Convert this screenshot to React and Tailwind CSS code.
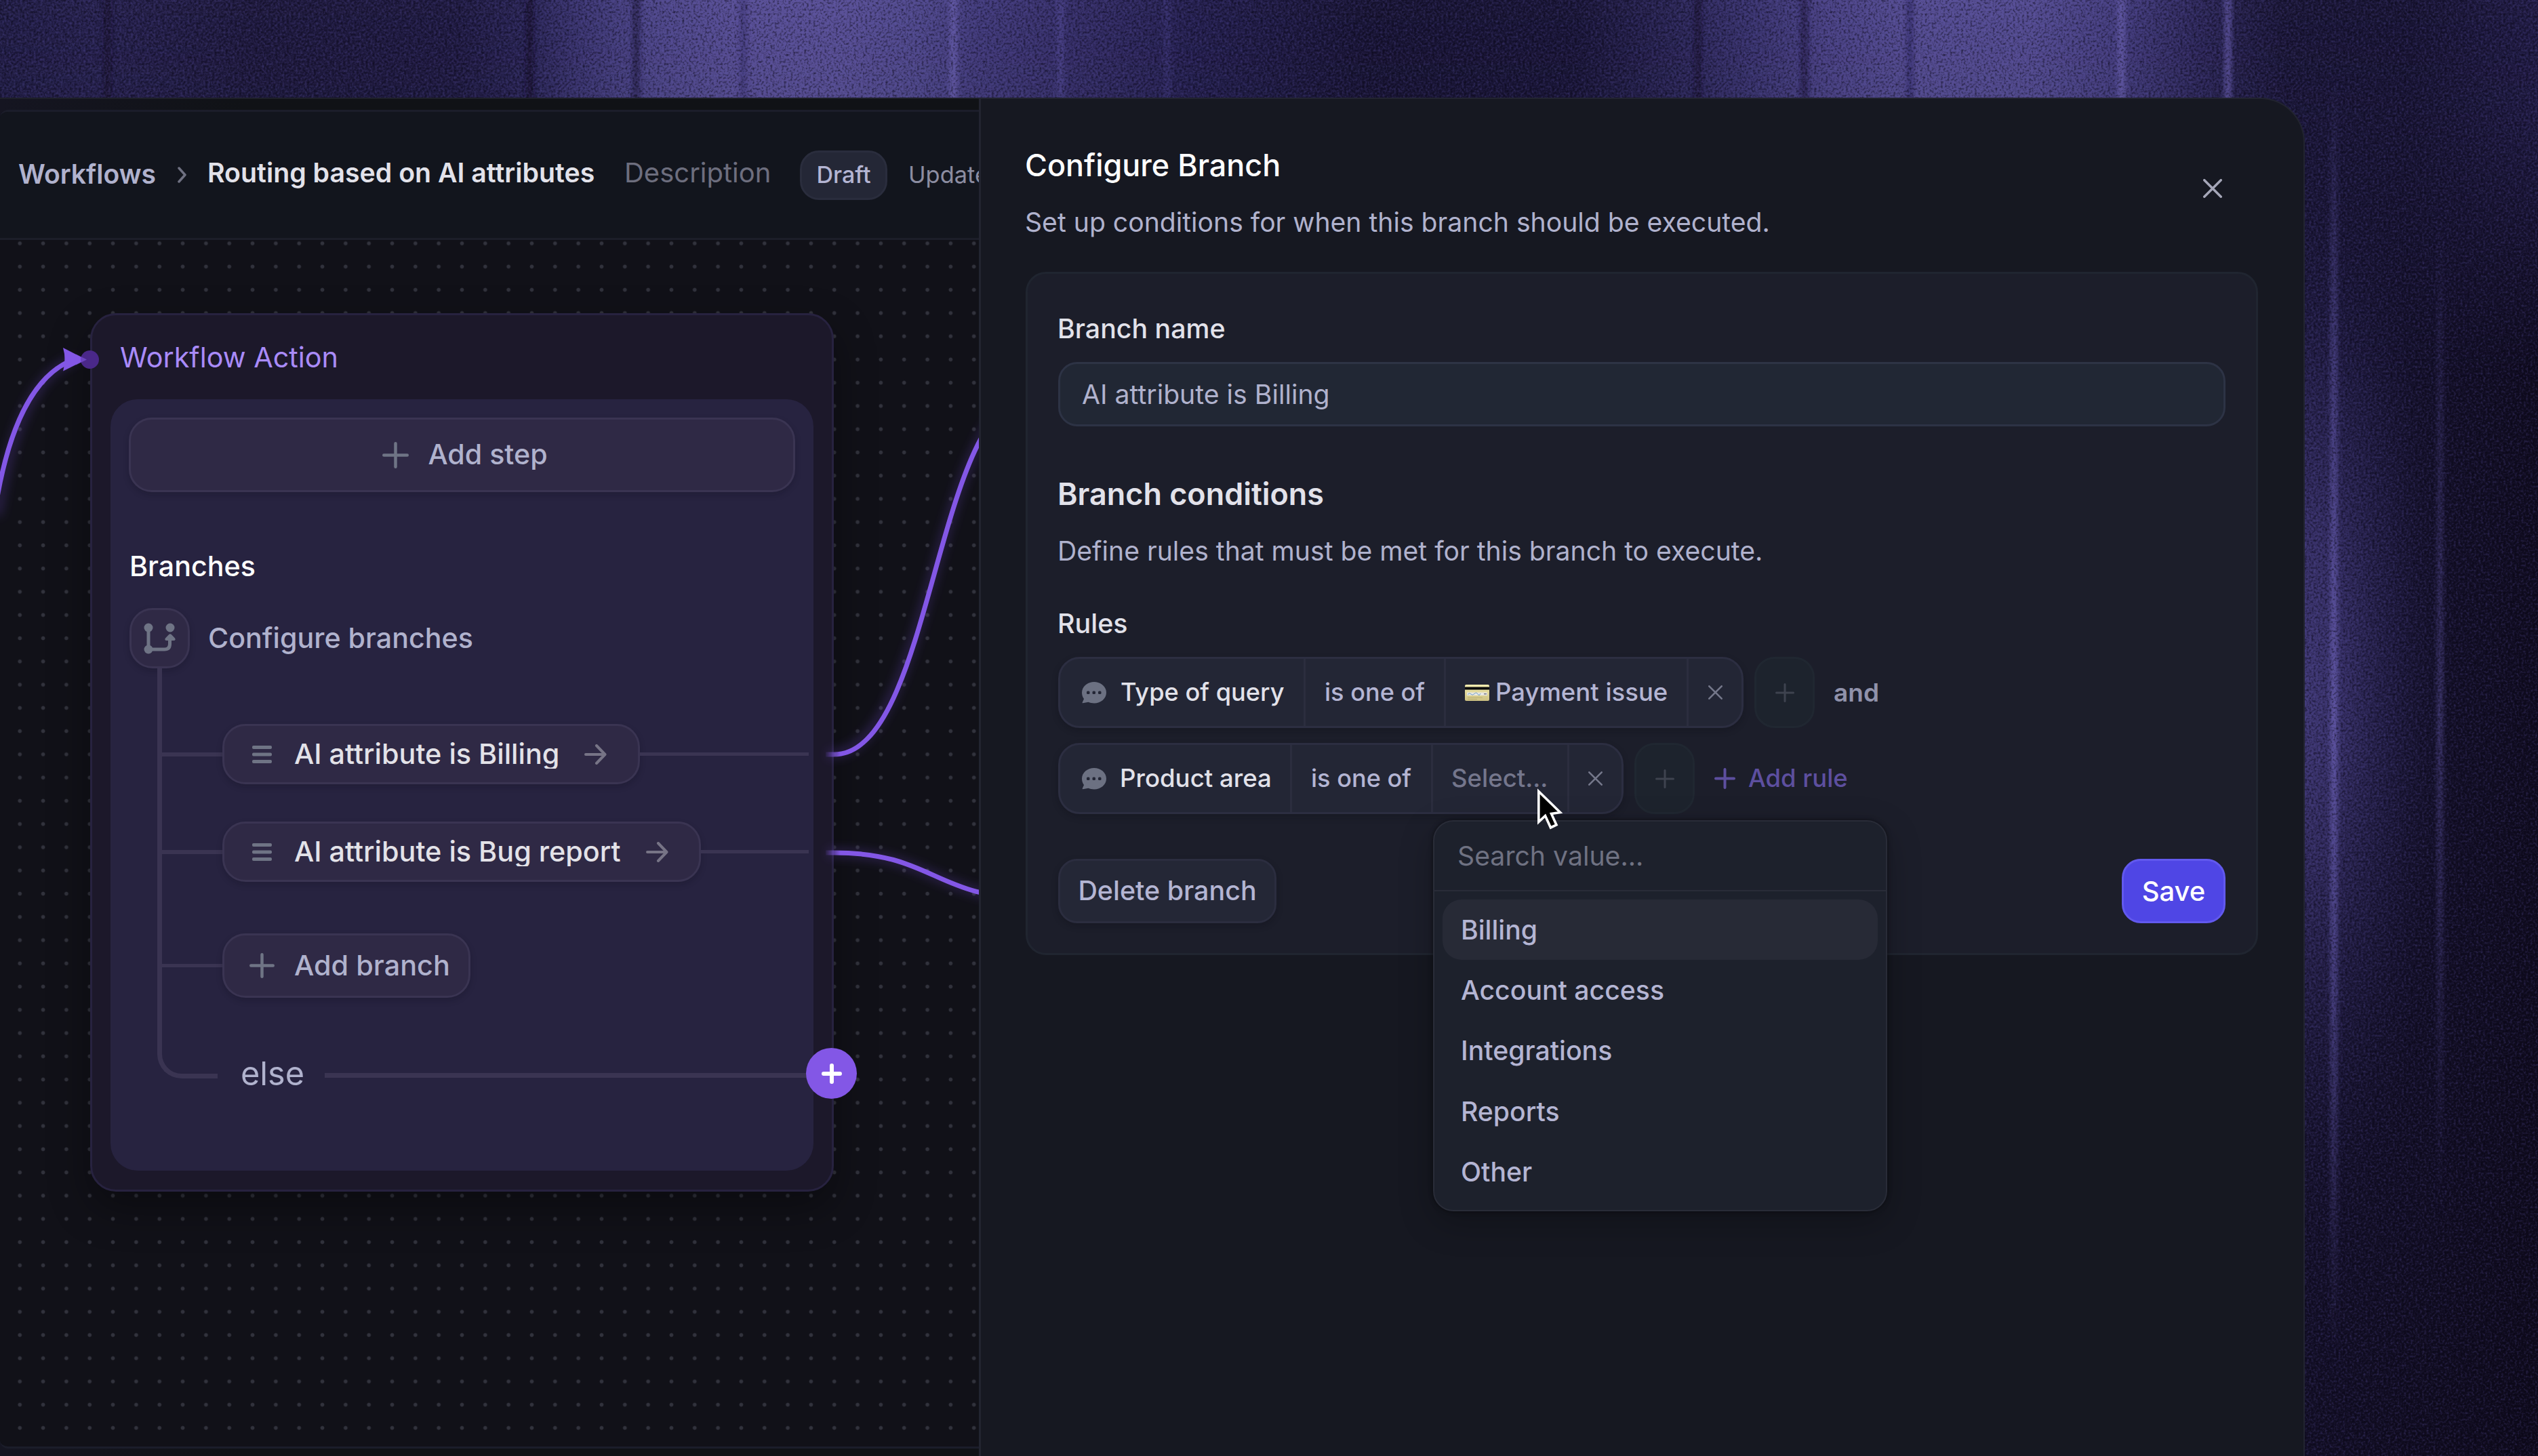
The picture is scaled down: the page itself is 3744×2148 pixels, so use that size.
import React from "react";

const BG_STOPS = [
  [0, "#231f47"], [0.04, "#28234f"], [0.1, "#201b3f"], [0.18, "#211c43"], [0.208, "#2b2656"], [0.23, "#3d3772"],
  [0.255, "#4e4789"], [0.29, "#595096"], [0.33, "#5a5197"], [0.36, "#514a8d"], [0.385, "#433c7b"], [0.42, "#373069"],
  [0.47, "#262150"], [0.54, "#1a1636"], [0.62, "#1b1739"], [0.66, "#2b2655"], [0.69, "#3a346e"], [0.72, "#4b4385"],
  [0.755, "#564e93"], [0.8, "#554d92"], [0.835, "#453e7e"], [0.865, "#2f295b"], [0.9, "#1c1839"], [0.95, "#1a1636"], [1, "#221d46"],
];

const TOP_STREAKS = [
  [158, "#120e26", 0.5], [781, "#120e2c", 0.65], [938, "#1a153a", 0.6], [1096, "#2d2660", 0.4], [1406, "#7a70c4", 0.45],
  [1564, "#5d54a6", 0.35], [1721, "#4f4696", 0.25], [2504, "#130f2b", 0.55], [2661, "#150f30", 0.5], [2817, "#2d2762", 0.6],
  [3129, "#7a70c4", 0.45], [3286, "#6a60b2", 0.6],
];

function Backdrop() {
  return (
    <svg className="absolute inset-0" width="3744" height="2148" viewBox="0 0 3744 2148" aria-hidden="true">
      <defs>
        <linearGradient id="band" x1="0" x2="1" y1="0" y2="0">
          {BG_STOPS.map(([o, c]) => <stop key={o} offset={o} stopColor={c} />)}
        </linearGradient>
        <linearGradient id="bandFade" x1="0" x2="0" y1="0" y2="1">
          <stop offset="0" stopColor="#fff" />
          <stop offset="0.3" stopColor="#fff" stopOpacity="0.9" />
          <stop offset="1" stopColor="#fff" stopOpacity="0" />
        </linearGradient>
        <mask id="bandMask"><rect width="3744" height="560" fill="url(#bandFade)" /></mask>
        <radialGradient id="side" gradientUnits="userSpaceOnUse" cx="0" cy="0" r="1" gradientTransform="translate(3395 1020) scale(215 860)">
          <stop offset="0" stopColor="#3f3874" />
          <stop offset="0.3" stopColor="#373067" stopOpacity="0.9" />
          <stop offset="0.65" stopColor="#282350" stopOpacity="0.5" />
          <stop offset="1" stopColor="#1a1636" stopOpacity="0" />
        </radialGradient>
        <linearGradient id="edge" x1="0" x2="1" y1="0" y2="0">
          <stop offset="0" stopColor="#1b1739" />
          <stop offset="1" stopColor="#100c20" />
        </linearGradient>
        <linearGradient id="foot" x1="0" x2="0" y1="0" y2="1">
          <stop offset="0" stopColor="#0d0918" stopOpacity="0" />
          <stop offset="1" stopColor="#0d0918" stopOpacity="0.5" />
        </linearGradient>
        <linearGradient id="streakA" x1="0" x2="0" y1="0" y2="1">
          <stop offset="0" stopColor="#5a519f" stopOpacity="0" />
          <stop offset="0.2" stopColor="#5a519f" stopOpacity="0.5" />
          <stop offset="0.5" stopColor="#655bab" stopOpacity="0.85" />
          <stop offset="0.72" stopColor="#5a519f" stopOpacity="0.6" />
          <stop offset="1" stopColor="#5a519f" stopOpacity="0" />
        </linearGradient>
        <filter id="grainDark" x="0" y="0" width="1" height="1" colorInterpolationFilters="sRGB">
          <feTurbulence type="fractalNoise" baseFrequency="0.3" numOctaves="2" seed="4" />
          <feColorMatrix values="0 0 0 0 0.02  0 0 0 0 0.01  0 0 0 0 0.06  -1.5 0 0 0 0.78" />
        </filter>
        <filter id="grainLight" x="0" y="0" width="1" height="1" colorInterpolationFilters="sRGB">
          <feTurbulence type="fractalNoise" baseFrequency="0.3" numOctaves="2" seed="4" />
          <feColorMatrix values="0 0 0 0 0.42  0 0 0 0 0.38  0 0 0 0 0.76  0.7 0 0 0 -0.35" />
        </filter>
        <filter id="soft" x="-2" width="5" y="0" height="1"><feGaussianBlur stdDeviation="3 0" /></filter>
      </defs>
      <rect width="3744" height="2148" fill="#15112c" />
      <rect x="3330" width="414" height="2148" fill="url(#edge)" />
      <rect x="3330" width="414" height="2148" fill="url(#side)" />
      <rect x="3330" y="1100" width="414" height="1048" fill="url(#foot)" />
      <rect width="3744" height="560" fill="url(#band)" mask="url(#bandMask)" />
      {TOP_STREAKS.map(([x, c, o]) => (
        <rect key={x} x={x - 5} y="0" width="11" height="150" fill={c} opacity={o} filter="url(#soft)" />
      ))}
      <rect x="3438" y="100" width="10" height="1900" fill="url(#streakA)" filter="url(#soft)" />
      <rect x="3595" y="300" width="9" height="1500" fill="url(#streakA)" opacity="0.5" filter="url(#soft)" />
      <rect width="3744" height="150" filter="url(#grainDark)" />
      <rect width="3744" height="150" filter="url(#grainLight)" />
      <rect x="3330" y="150" width="414" height="1998" filter="url(#grainDark)" />
      <rect x="3330" y="150" width="414" height="1998" filter="url(#grainLight)" />
    </svg>
  );
}

const Plus = ({ size, w, className }) => (
  <svg className={className} width={size} height={size} viewBox={`0 0 ${size} ${size}`} fill="none" stroke="currentColor" strokeWidth={w} strokeLinecap="round">
    <path d={`M${size / 2} ${w / 2}V${size - w / 2}M${w / 2} ${size / 2}H${size - w / 2}`} />
  </svg>
);

const Cross = ({ size, w, className }) => (
  <svg className={className} width={size} height={size} viewBox={`0 0 ${size} ${size}`} fill="none" stroke="currentColor" strokeWidth={w} strokeLinecap="round">
    <path d={`M${w / 2} ${w / 2}L${size - w / 2} ${size - w / 2}M${size - w / 2} ${w / 2}L${w / 2} ${size - w / 2}`} />
  </svg>
);

const Arrow = () => (
  <svg className="shrink-0 text-[#777486]" width="33" height="30" viewBox="0 0 33 30" fill="none" stroke="currentColor" strokeWidth="4" strokeLinecap="round" strokeLinejoin="round">
    <path d="M2 15H30M18 2L30.5 15L18 28" />
  </svg>
);

const Handle = () => (
  <svg className="shrink-0" width="29" height="26" viewBox="0 0 29 26" fill="#6f7485">
    <rect y="0" width="29" height="5" rx="2" />
    <rect y="10.5" width="29" height="5" rx="2" />
    <rect y="21" width="29" height="5" rx="2" />
  </svg>
);

const BranchIcon = () => (
  <svg width="47" height="46" viewBox="0 0 47 46" fill="#6f7485">
    <circle cx="7" cy="7" r="6.5" />
    <circle cx="39" cy="7" r="6.5" />
    <circle cx="7" cy="39" r="6.5" />
    <path d="M7 7V39M7 39H30.500Q38.500 39 38.500 31V22" fill="none" stroke="#6f7485" strokeWidth="5" />
    <path d="M37.500 16.800Q39 15.600 40.500 16.800L45.800 22.200Q48 26 44 26H34Q30 26 32.200 22.200Z" />
  </svg>
);

const Bubble = () => (
  <svg className="shrink-0" width="36" height="32" viewBox="0 0 36 32">
    <path d="M18 0C28 0 36 7 36 15.800C36 24.600 28 31.500 18 31.500C15 31.500 12 31 9.500 29.800L1.500 31.300Q0 31.300 .8 30L3 25C1 22.500 0 19.300 0 15.800C0 7 8 0 18 0Z" fill="#6c7182" />
    <rect x="7" y="13.500" width="4.500" height="4.500" rx="1.500" fill="#232635" />
    <rect x="15.500" y="13.500" width="4.500" height="4.500" rx="1.500" fill="#232635" />
    <rect x="24" y="13.500" width="4.500" height="4.500" rx="1.500" fill="#232635" />
  </svg>
);

const CreditCard = () => (
  <svg className="shrink-0" width="36" height="24" viewBox="0 0 36 24">
    <defs>
      <linearGradient id="gold" x1="0" x2="0" y1="0" y2="1">
        <stop offset="0" stopColor="#f3ecb0" />
        <stop offset="1" stopColor="#cdc182" />
      </linearGradient>
    </defs>
    <rect width="36" height="24" rx="2" fill="url(#gold)" />
    <rect y="3.500" width="36" height="4" fill="#0b0b0b" />
    <rect x="3" y="11.500" width="30" height="4.500" fill="#e9e9e4" />
    <path d="M4 14.500Q7 11.500 9 14T14 13.500T19 14T23 13" fill="none" stroke="#6f9cc4" strokeWidth="1" />
    <path d="M28 13.800H32" stroke="#445" strokeWidth="1" />
    <path d="M4 19H26M4 21.500H18" stroke="#b5aa6c" strokeWidth="0.800" />
  </svg>
);

const chipBase = "flex shrink-0 items-center border-[3px] border-[#3a3452] bg-[#2f2945] shadow-[0_4px_10px_rgba(10,8,20,0.2)]";

function BranchRow({ label, className, chip }) {
  return (
    <div className={`flex h-[89px] items-center ${className}`}>
      <div className="h-[6px] w-[89px] shrink-0 bg-[#3a3452]" />
      <div className={`${chipBase} ${chip} h-[89px] rounded-[34px] pl-[41px]`}>
        <Handle />
        <span className="ml-[33px] h-[43px] overflow-hidden text-[41.35px] leading-[43px] font-medium text-[#e3e2e8]">{label}</span>
        <div className="ml-[37px] flex"><Arrow /></div>
      </div>
      <div className="h-[5px] flex-1 bg-[#3a3452]" />
    </div>
  );
}

function ActionCard() {
  return (
    <div className="absolute top-[108px] left-[133px] flex h-[1296px] w-[1097px] flex-col rounded-[38px] border-[3px] border-[#27223f] bg-[#1c182a] px-[27px] shadow-[0_24px_60px_rgba(0,0,0,0.35)]">
      <div className="flex h-[125px] items-center pl-[14px] text-[41.35px] text-[#a98bfa]">Workflow Action</div>
      <div className="-mt-px flex h-[1138px] flex-col rounded-[40px] bg-[#272340] px-[27px] pt-[27px]">
        <div className={`${chipBase} h-[110px] justify-center rounded-[34px] pl-[9px]`}>
          <Plus size={39} w={4.5} className="text-[#6f7485]" />
          <span className="ml-[28px] text-[41.2px] font-medium text-[#b0b2cd]">Add step</span>
        </div>
        <div className="mt-[80px] ml-px flex h-[60px] items-center text-[41.2px] font-medium text-white">Branches</div>
        <div className="mt-[31px] ml-px flex h-[89px] items-center">
          <div className={`${chipBase} h-[89px] w-[89px] justify-center rounded-[34px]`}><BranchIcon /></div>
          <span className="ml-[27px] text-[41.2px] font-medium text-[#b0b2cd]">Configure branches</span>
        </div>
        <div className="relative ml-[42px] flex w-[961px] flex-col pl-[7px]">
          <div className="absolute top-0 left-0 h-[605px] w-[89px] rounded-bl-[36px] border-b-[7px] border-l-[7px] border-[#3a3452]" />
          <BranchRow label="AI attribute is Billing" className="mt-[82px]" chip="w-[616px]" />
          <BranchRow label="AI attribute is Bug report" className="mt-[55px]" chip="w-[706px]" />
          <div className="mt-[76px] flex h-[95px] items-center">
            <div className="h-[5px] w-[89px] bg-[#3a3452]" />
            <div className={`${chipBase} h-[95px] w-[366px] rounded-[34px] pl-[37px]`}>
              <Plus size={37} w={4.5} className="text-[#6f7485]" />
              <span className="ml-[29px] text-[41.4px] font-medium text-[#b0b2cd]">Add branch</span>
            </div>
          </div>
          <div className="mt-[73px] flex h-[75px] items-center">
            <span className="ml-[116px] w-[124px] pt-[3px] text-[48.6px] text-[#b0b2cd]">else</span>
            <div className="mt-[7px] h-[7px] w-[716px] bg-[#3a3452]" />
          </div>
          <div className="absolute top-[560px] left-[957px] flex h-[75px] w-[75px] items-center justify-center rounded-full bg-[#8357e6] text-white">
            <Plus size={30} w={6} />
          </div>
        </div>
      </div>
    </div>
  );
}

function Connectors() {
  return (
    <svg className="absolute inset-0" width="1444" height="1780" viewBox="0 354 1444 1780" fill="none">
      <defs>
        <filter id="glow" x="-20%" y="-20%" width="140%" height="140%"><feGaussianBlur stdDeviation="8" /></filter>
        <linearGradient id="start" gradientUnits="userSpaceOnUse" x1="1216" x2="1240" y1="0" y2="0">
          <stop offset="0" stopColor="#8357e6" stopOpacity="0" />
          <stop offset="1" stopColor="#8357e6" />
        </linearGradient>
      </defs>
      <g stroke="#7a4fe0" strokeWidth="10" opacity="0.32" filter="url(#glow)">
        <path d="M-4 760C14 640 48 552 110 530" />
        <path d="M1222 1113C1378 1113 1378 583 1525 583" />
        <path d="M1222 1258C1378 1258 1378 1325 1525 1325" />
      </g>
      <path d="M-6 745C12 635 48 552 110 530" stroke="#8357e6" strokeWidth="7" />
      <g stroke="url(#start)" strokeWidth="7">
        <path d="M1218 1113H1230C1378 1113 1378 583 1525 583" />
        <path d="M1218 1258H1230C1378 1258 1378 1325 1525 1325" />
      </g>
      <path d="M93 513L127 530.500L93 547.500Q98 530 93 513Z" fill="#8357e6" />
      <circle cx="132.500" cy="530.500" r="13.500" fill="#4a2889" />
      <path d="M112 522.500L128 530.500L112 538.500Z" fill="#8357e6" opacity="0.600" />
    </svg>
  );
}

function Workspace() {
  return (
    <div className="h-[2004px] w-[1444px] shrink-0 overflow-hidden border-t-[2px] border-[#1e2029] bg-[#101216] bg-linear-to-r from-[#151521] via-[#101216] via-25% to-[#101216] pt-[16px]">
      <div className="flex h-[1975px] flex-col overflow-hidden rounded-l-[12px] border-y-[3px] border-[#1b1d2a] bg-[#111118]">
        <div className="flex h-[189px] shrink-0 items-center border-b-[3px] border-[#1c1e29] bg-[#12151d] pl-[27px] whitespace-nowrap">
          <span className="w-[235px] shrink-0 pb-[2px] text-[39.1px] font-semibold text-[#b0b2cd]">Workflows</span>
          <svg className="shrink-0" width="14" height="24" viewBox="0 0 14 24" fill="none" stroke="#6f7182" strokeWidth="3.500" strokeLinecap="round" strokeLinejoin="round">
            <path d="M2 2L11 12L2 22" />
          </svg>
          <span className="ml-[30px] w-[615px] shrink-0 pb-[6px] text-[39.25px] font-semibold text-[#e2e2ea]">Routing based on AI attributes</span>
          <span className="w-[259px] shrink-0 pb-[6px] text-[40px] text-[#6d6e7e]">Description</span>
          <span className="flex h-[73px] w-[129px] shrink-0 items-center justify-center rounded-[28px] border-[3px] border-[#2a2d3d] bg-[#242736] text-[34px] font-medium text-[#b4b5d3]">Draft</span>
          <span className="ml-[31px] shrink-0 text-[34.4px] text-[#8c8da1]">Updated</span>
        </div>
        <div className="relative flex-1 bg-[radial-gradient(circle,#31323c_2.400px,transparent_3.300px)] bg-[size:34.330px_34.270px] bg-position-[12.100px_-12.100px]">
          <ActionCard />
          <Connectors />
        </div>
      </div>
    </div>
  );
}

const ruleBase = "flex h-[105px] overflow-hidden rounded-[32px] border-[3px] border-[#2c2e41] bg-[#232635] text-[36.4px] font-medium text-[#b4b5d3] shadow-[0_4px_10px_rgba(10,10,20,0.25)]";
const seg = "flex shrink-0 items-center border-l-[3px] border-[#2b2d3e]";

function AddButton() {
  return (
    <div className="ml-[16px] flex h-[105px] w-[89px] items-center justify-center rounded-[30px] border-[3px] border-[#202731] bg-[#1d232d] text-[#3e434f]">
      <Plus size={28} w={3} />
    </div>
  );
}

const OPTIONS = ["Billing", "Account access", "Integrations", "Reports", "Other"];

function ValueMenu() {
  return (
    <div className="absolute top-[114px] left-[553px] z-10 flex h-[577px] w-[670px] flex-col rounded-[30px] border-[2px] border-[#292c38] bg-[#1d212c] shadow-[0_0_6px_rgba(0,0,0,0.5),0_16px_50px_rgba(0,0,0,0.25)]">
      <div className="flex h-[103px] items-center border-b-[2px] border-[#292c38] pb-0 pl-[34px] text-[39.2px] text-[#6f7282]">Search value...</div>
      <div className="flex flex-col px-[12px] pt-[12px]">
        {OPTIONS.map((o, i) => (
          <div key={o} className={`flex h-[89.200px] items-center rounded-[28px] pl-[27px] text-[39.2px] font-medium text-[#b4b5d3] ${i === 0 ? "bg-[#272a36]" : ""}`}>{o}</div>
        ))}
      </div>
    </div>
  );
}

function ConfigurePanel() {
  return (
    <div className="h-[2010px] w-[1956px] shrink-0 rounded-tr-[66px] border-t-[2px] border-r-[2px] border-l-[3px] border-[#222430] bg-[#161821] pr-[67px] pl-[66px]">
      <div className="flex items-start justify-between">
        <div className="-ml-px">
          <div className="mt-[70px] flex h-[56px] items-center text-[44.9px] font-medium text-white">Configure Branch</div>
          <div className="mt-[32px] flex h-[48px] items-center text-[39.15px] text-[#b0b2cd]">Set up conditions for when this branch should be executed.</div>
        </div>
        <Cross size={28} w={3.5} className="mt-[118px] mr-[53px] text-[#a5a6b8]" />
      </div>
      <div className="mt-[49px] flex h-[1008px] flex-col rounded-[30px] border-[3px] border-[#202530] bg-[#1c1e2a] px-[45px]">
        <div className="-ml-[1px] mt-[57px] flex h-[48px] items-center text-[39.3px] font-medium text-[#e2e2ea]">Branch name</div>
        <div className="mt-[25px] flex h-[95px] items-center rounded-[28px] border-[3px] border-[#2d3345] bg-[#212734] pl-[32px] text-[39.2px] text-[#b0b2cd]">AI attribute is Billing</div>
        <div className="-ml-[1px] mt-[72px] flex h-[56px] items-center text-[44.9px] font-semibold text-[#e2e2ea]">Branch conditions</div>
        <div className="-ml-[1px] mt-[32px] flex h-[48px] items-center text-[39.15px] text-[#b0b2cd]">Define rules that must be met for this branch to execute.</div>
        <div className="-ml-[1px] mt-[60px] flex h-[48px] items-center text-[39.4px] font-medium text-[#e2e2ea]">Rules</div>
        <div className="mt-[24px] flex h-[105px] items-center">
          <div className={`${ruleBase} w-[1011px]`}>
            <div className="flex w-[359px] shrink-0 items-center pl-[32px] text-[36.2px] text-[#e2e2ea]"><Bubble /><span className="ml-[21px]">Type of query</span></div>
            <div className={`${seg} w-[207px] pl-[28px] text-[36.1px]`}>is one of</div>
            <div className={`${seg} w-[358px] pl-[28px]`}><CreditCard /><span className="ml-[9px] text-[36.5px]">Payment issue</span></div>
            <div className={`${seg} flex-1 justify-center text-[#74778a]`}><Cross size={21} w={2.6} /></div>
          </div>
          <AddButton />
          <span className="ml-[28px] text-[37px] font-semibold text-[#9092ab]">and</span>
        </div>
        <div className="relative mt-[22px] flex h-[105px] items-center">
          <div className={`${ruleBase} w-[834px]`}>
            <div className="flex w-[339px] shrink-0 items-center pl-[32px] text-[36.6px] text-[#e2e2ea]"><Bubble /><span className="ml-[20px]">Product area</span></div>
            <div className={`${seg} w-[208px] pl-[28px] text-[36.1px]`}>is one of</div>
            <div className={`${seg} w-[201px] pl-[27px] text-[36.5px] text-[#74768c]`}>Select...</div>
            <div className={`${seg} flex-1 justify-center text-[#74778a]`}><Cross size={21} w={2.6} /></div>
          </div>
          <AddButton />
          <Plus size={31} w={4} className="ml-[29px] text-[#5d4f9f]" />
          <span className="ml-[19px] text-[36.4px] font-medium text-[#5d4f9f]">Add rule</span>
          <ValueMenu />
          <svg className="absolute top-[64px] left-[704px] z-20" width="44" height="66" viewBox="-3 -4 44 66">
            <path d="M1.800 3.500L33.500 34.500L20.500 36.500L28 53L19.500 57L11.500 39.500L1.800 48.500Z" fill="#000" stroke="#fff" strokeWidth="3.600" />
          </svg>
        </div>
        <div className="mt-[66px] flex h-[95px] justify-between text-[39.4px] font-medium">
          <div className="flex w-[322px] items-center justify-center rounded-[28px] border-[3px] border-[#2b2d3f] bg-[#242736] text-[#b4b5d3] shadow-[0_4px_10px_rgba(10,10,20,0.25)]">Delete branch</div>
          <div className="flex w-[153px] items-center justify-center rounded-[28px] border-[3px] border-[#6259ee] bg-[#4f46e5] text-[40px] text-white">Save</div>
        </div>
      </div>
    </div>
  );
}

export default function App() {
  return (
    <div className="relative h-[2148px] w-[3744px] overflow-hidden bg-[#120e22] font-['Inter',sans-serif] leading-none">
      <Backdrop />
      <div className="relative flex pt-[144px]">
        <Workspace />
        <ConfigurePanel />
      </div>
    </div>
  );
}
